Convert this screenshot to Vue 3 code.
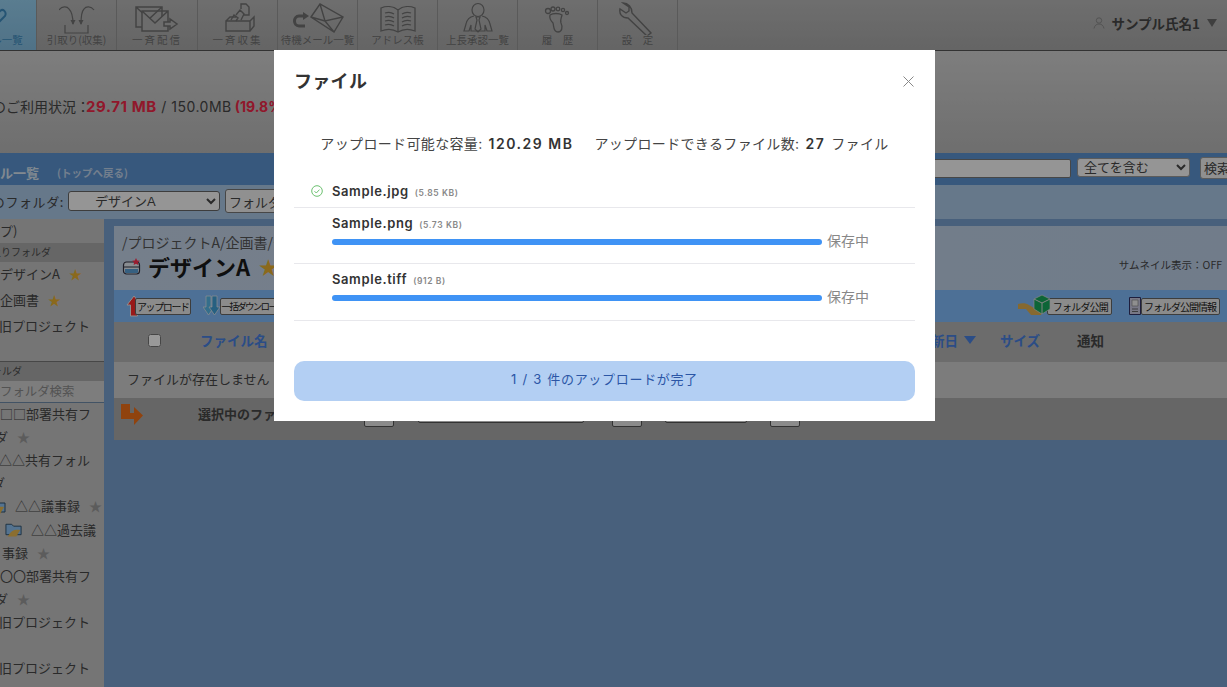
<script setup>
import { ref } from "vue";

const doneCount = ref(1);

const files = [
  { name: "Sample.jpg", size: "5.85 KB", done: true },
  { name: "Sample.png", size: "5.73 KB", done: false },
  { name: "Sample.tiff", size: "912 B", done: false },
];

const favorites = [
  { text: "デザインA", star: "gold" },
  { text: "企画書", star: "gold" },
  { text: "旧プロジェクト", cut: "cut1" },
];
</script>

<template>
  <div class="page">
    <!-- 上部ツールバー -->
    <header class="toolbar">
      <a class="tool active">
        <svg class="ic" width="44" height="34" viewBox="0 0 44 34" fill="none" stroke="#3f8cc0" stroke-width="2">
          <path d="M14 22L25 10c3-3 7 1 5 5L19 26c-2 2-4 1-6 0" />
        </svg>
        <span>メール一覧</span>
      </a>
      <a class="tool">
        <svg class="ic" width="36" height="34" viewBox="0 0 36 34" fill="none" stroke="#707070" stroke-width="1.200">
          <path d="M0 9c3-4 8-4 10-1 3 3 4 9 4 15M35 9c-3-4-8-4-10-1-3 3-3 9-3 15" />
          <path d="M11.500 19l2.500 5 2.500-5zM19.500 19l2.500 5 2.500-5z" fill="#707070" stroke="none" />
          <path d="M6 24v8h23v-8" />
        </svg>
        <span>引取り(収集)</span>
      </a>
      <a class="tool wide first-wide">
        <svg class="ic" width="44" height="34" viewBox="0 0 44 34" fill="none" stroke="#707070" stroke-width="1.500">
          <path d="M1 6h26v20H1zM1 6l13 12L27 6" />
          <path d="M7 10h26v20H7zM7 10l13 12 13-12" fill="#b4b4b4" />
          <path d="M29 21h6v-3l7 5-7 5v-3h-6z" fill="#b4b4b4" />
        </svg>
        <span>一斉配信</span>
      </a>
      <a class="tool wide">
        <svg class="ic" width="36" height="34" viewBox="0 0 36 34" fill="none" stroke="#707070" stroke-width="1.400">
          <path d="M6 20h24v10H6zM30 20l4-4v9l-4 5M6 20l4-4h6" />
          <path d="M11 19l3-5 4 3-2 3M16 14l4-5 4 4-3 6M21 8V3h5l3 3v8h-5" />
        </svg>
        <span>一斉収集</span>
      </a>
      <a class="tool">
        <svg class="ic" width="54" height="34" viewBox="0 0 54 34" fill="none" stroke="#707070">
          <path d="M14 15H8c-6 0-6 10 0 10h6" stroke-width="3" />
          <path d="M12 11l6 4-6 4z" fill="#707070" stroke="none" />
          <path d="M20 16L29 3l23 13-9 15zM29 3l5 17 18-4M20 16l14 4M34 20l9 11" stroke-width="1.400" />
        </svg>
        <span>待機メール一覧</span>
      </a>
      <a class="tool">
        <svg class="ic" width="38" height="34" viewBox="0 0 38 34" fill="none" stroke="#707070" stroke-width="1.300">
          <path d="M19 9C14 5 7 5 2 7v23c5-2 12-2 17 1 5-3 12-3 17-1V7c-5-2-12-2-17 2zM19 9v22" />
          <path d="M6 12c3-1 6-1 9 1M6 16c3-1 6-1 9 1M6 20c3-1 6-1 9 1M6 24c3-1 6-1 9 1M23 13c3-2 6-2 9-1M23 17c3-2 6-2 9-1M23 21c3-2 6-2 9-1M23 25c3-2 6-2 9-1" />
        </svg>
        <span>アドレス帳</span>
      </a>
      <a class="tool">
        <svg class="ic" width="30" height="34" viewBox="0 0 30 34" fill="none" stroke="#707070" stroke-width="1.200">
          <ellipse cx="15" cy="9" rx="6" ry="6.500" />
          <path d="M11 15c-5 1-7 3-8 8l-2 7h5l2-6v6h14v-6l2 6h5l-2-7c-1-5-3-7-8-8" />
          <path d="M13 16h4l-1 3 2 9-3 3-3-3 2-9z" />
        </svg>
        <span>上長承認一覧</span>
      </a>
      <a class="tool">
        <svg class="ic" width="28" height="34" viewBox="0 0 28 34" fill="none" stroke="#707070" stroke-width="1.300">
          <path d="M6 14c-1 4 1 6 3 8 1 3 0 9 5 9 4 0 5-5 3-9-1-3 0-4 1-8-3-2-9-2-12 0z" />
          <circle cx="4" cy="10" r="2.500" />
          <circle cx="9" cy="8" r="2" />
          <circle cx="14" cy="8" r="1.800" />
          <circle cx="19" cy="9" r="1.600" />
          <circle cx="23" cy="12" r="1.500" />
        </svg>
        <span class="spaced">履 歴</span>
      </a>
      <a class="tool">
        <svg class="ic" width="38" height="34" viewBox="0 0 38 34" fill="none" stroke="#707070" stroke-width="1.400">
          <path d="M4 2l6 4v4l-3 2-6-4c-1 5 2 9 8 9l19 18 4-3-19-20c0-6-4-10-9-10z" />
        </svg>
        <span class="spaced">設 定</span>
      </a>
      <div class="user">
        <svg width="12" height="12" viewBox="0 0 12 12" fill="none" stroke="#8a8a8a" stroke-width="1">
          <circle cx="6" cy="3.500" r="2.700" />
          <path d="M1 11.500c.5-3 2.500-4.500 5-4.500s4.500 1.500 5 4.500" />
        </svg>
        <b>サンプル氏名1</b>
        <i class="caret"></i>
      </div>
    </header>

    <!-- 容量 -->
    <section class="usage">
      <p>
        容量のご利用状況：<b class="red mb">29.71 MB</b><span class="limit"> / 150.0MB</span><b class="red">(19.8%)</b>
      </p>
    </section>

    <section class="titlebar">
      <div class="crumb">
        <b>メール一覧</b>
        <small>(トップへ戻る)</small>
      </div>
      <div class="search">
        <input type="text" />
        <select class="sel-all"><option>全てを含む</option></select>
        <button type="button" class="btn-search">検索</button>
      </div>
    </section>

    <section class="folderbar">
      <span class="folder-label">現在のフォルダ:</span>
      <select class="sel-folder"><option>デザインA</option></select>
      <button type="button" class="btn-folder">フォルダ操作</button>
    </section>

    <main class="main">
      <aside class="side">
        <div class="row top"><span class="cut-top">トップ)</span></div>
        <div class="band"><span class="cut-fav">お気に入りフォルダ</span></div>
        <div v-for="f in favorites" :key="f.text" class="row fav">
          <span :class="f.cut">{{ f.text }}</span>
          <i v-if="f.star" class="star gold">★</i>
        </div>
        <div class="band second"><span class="cut-share">フォルダ</span></div>
        <div class="side-search"><span>フォルダ検索</span></div>
        <div class="tree">
          <div class="row">□□部署共有フ</div>
          <div class="row"><span class="cut-da">ダ</span><i class="star">★</i></div>
          <div class="row"><span class="cut1">△△共有フォル</span></div>
          <div class="row"><span class="cut-da2">ダ</span></div>
          <div class="row">
            <svg class="folder cut-icon" width="19" height="18" viewBox="0 0 19 18">
              <path d="M1 4h6l2 2h8v9H1z" fill="#8cc0f0" stroke="#30506c" />
              <path d="M3 17c3-7 8-8 13-7l-4 7z" fill="#e8b850" />
            </svg>
            <span class="t1">△△議事録</span><i class="star">★</i>
          </div>
          <div class="row tall">
            <svg class="folder indent" width="18" height="18" viewBox="0 0 19 18">
              <path d="M1 4h6l2 2h8v9H1z" fill="#8cc0f0" stroke="#30506c" />
              <path d="M3 17c3-7 8-8 13-7l-4 7z" fill="#e8b850" />
            </svg>
            <span class="t2">△△過去議</span>
          </div>
          <div class="row"><span class="t3">事録</span><i class="star">★</i></div>
          <div class="row">〇〇部署共有フ</div>
          <div class="row"><span class="cut-da">ダ</span><i class="star">★</i></div>
          <div class="row"><span class="cut1">旧プロジェクト</span></div>
          <div class="row"></div>
          <div class="row"><span class="cut1">旧プロジェクト</span></div>
        </div>
      </aside>

      <div class="content">
        <div class="panel">
          <div class="path">/プロジェクトA/企画書/デザインA</div>
          <div class="panel-title">
            <svg width="20" height="18" viewBox="0 0 20 18" fill="none">
              <rect x="1.500" y="5" width="16" height="12" rx="3" fill="#e4ecf4" stroke="#334" stroke-width="1.200" />
              <path d="M2 10h15" stroke="#334" />
              <path d="M3 12h13v3c0 .6-.4 1-1 1H4c-.6 0-1-.4-1-1z" fill="#5aa0d8" />
              <path d="M14 1l1.200 2.400 2.600.3-1.900 1.800.5 2.500-2.400-1.200-2.400 1.200.5-2.500-1.900-1.800 2.600-.3z" fill="#ff3050" />
            </svg>
            <h1>デザインA</h1>
            <i class="star gold big">★</i>
            <span class="thumb">サムネイル表示：OFF</span>
          </div>
        </div>

        <div class="actions">
          <a class="act upload">
            <svg width="16" height="22" viewBox="0 0 16 22">
              <path d="M8 1l7 9h-3.500v11h-7V10H1z" fill="#ff2a2a" stroke="#eee" />
            </svg>
            <span>アップロード</span>
          </a>
          <a class="act download">
            <svg width="18" height="22" viewBox="0 0 18 22">
              <path d="M3 1h5v11h3l-5.500 8L0 12h3z" fill="#58b8e8" stroke="#eee" stroke-width=".7" />
              <path d="M9 1h5v11h3l-5.500 8L6 12h3z" fill="#40a0d8" stroke="#eee" stroke-width=".7" />
            </svg>
            <span>一括ダウンロード</span>
          </a>
          <a class="act publish">
            <svg width="33" height="24" viewBox="0 0 33 24">
              <path d="M0 10c4-1 8-1 11 1l5 3h10l-3 7H13L8 15H0z" fill="#e0b050" />
              <path d="M24 1l8 4v10l-8 5-8-5V5z" fill="#16a85c" stroke="#ddd" stroke-width=".7" />
              <path d="M16 5l8 4 8-4M24 9v11" stroke="#ddd" stroke-width="1" fill="none" />
            </svg>
            <span>フォルダ公開</span>
          </a>
          <a class="act info">
            <svg width="12" height="18" viewBox="0 0 12 18">
              <path d="M.5.500h11v17H.5z" fill="#c8c8e0" stroke="#336" />
              <path d="M3 3h6v6H3z" fill="#eee" stroke="#888" stroke-width=".7" />
              <path d="M3 12h6M3 14.500h6" stroke="#666" />
            </svg>
            <span>フォルダ公開情報</span>
          </a>
        </div>

        <div class="thead">
          <input class="check" type="checkbox" />
          <b class="th-name">ファイル名</b>
          <b class="th-date">更新日<i class="sort"></i></b>
          <b class="th-size">サイズ</b>
          <b class="th-note">通知</b>
        </div>
        <div class="empty">ファイルが存在しません</div>
        <div class="selectbar">
          <svg width="22" height="23" viewBox="0 0 22 23">
            <path d="M0 1h9v9h4V4l9 8.500-9 9.500v-6H0z" fill="#f07018" />
          </svg>
          <b>選択中のファイルを</b>
          <div class="ctrls">
            <i class="ctrl w30"></i>
            <i class="ctrl w166 shallow"></i>
            <i class="ctrl w30"></i>
            <i class="ctrl w82 shallow"></i>
            <i class="ctrl w30"></i>
          </div>
        </div>
      </div>
    </main>

    <!-- アップロードモーダル -->
    <div class="overlay">
      <div class="modal">
        <h2>ファイル</h2>
        <button type="button" class="close" aria-label="閉じる">
          <svg width="11" height="11" viewBox="0 0 11 11" stroke="#888" stroke-width="1">
            <path d="M.5.500l10 10M10.500.500l-10 10" />
          </svg>
        </button>

        <p class="quota">
          <span>アップロード可能な容量:</span>
          <b>120.29 MB</b>
          <span class="gap">アップロードできるファイル数:</span>
          <b>27</b>
          <span>ファイル</span>
        </p>

        <ul class="files">
          <li v-for="f in files" :key="f.name" :class="{ done: f.done }">
            <svg v-if="f.done" class="ok" width="12" height="12" viewBox="0 0 12 12" fill="none" stroke="#6cc070">
              <circle cx="6" cy="6" r="5.300" />
              <path d="M3.500 6.200l1.800 1.800 3.200-3.400" />
            </svg>
            <div class="file-name">
              <b>{{ f.name }}</b>
              <small>({{ f.size }})</small>
            </div>
            <div v-if="!f.done" class="progress">
              <div class="bar"></div>
              <span>保存中</span>
            </div>
          </li>
        </ul>

        <div class="status">{{ doneCount }} / {{ files.length }} 件のアップロードが完了</div>
      </div>
    </div>
  </div>
</template>

<style scoped>
.page {
  position: relative;
  width: 1227px;
  height: 687px;
  overflow: hidden;
  display: flex;
  flex-direction: column;
  font-family: "Noto Sans CJK JP", sans-serif;
  font-size: 13px;
  color: #464646;
  background: #cfcfcf;
}

/* toolbar */
.toolbar {
  flex: none;
  display: flex;
  height: 51px;
  margin-left: -43px;
  width: 1270px;
  background: linear-gradient(#b8b8b8, #a8a8a8);
  border-bottom: 1px solid #555;
  box-sizing: border-box;
}
.tool {
  flex: none;
  width: 80px;
  height: 50px;
  box-sizing: border-box;
  border-right: 1px solid #969696;
  display: flex;
  flex-direction: column;
  align-items: center;
  font-size: 10.500px;
  line-height: 12px;
  color: #707070;
  white-space: nowrap;
}
.tool .ic {
  flex: none;
  margin-top: 1px;
}
.tool span {
  margin-top: -1px;
}
.tool.active {
  background: linear-gradient(#96d0f0, #85bee1);
  color: #3f8cc0;
}
.tool.first-wide {
  width: 81px;
}
.tool.wide span {
  letter-spacing: 2px;
}
.tool .spaced {
  word-spacing: 8px;
}
.user {
  margin-left: auto;
  display: flex;
  align-items: center;
  gap: 6px;
  height: 46px;
  padding-right: 10px;
  color: #464646;
}
.user b {
  font-size: 13.500px;
}
.caret {
  width: 0;
  height: 0;
  margin-left: 1px;
  border-left: 5px solid transparent;
  border-right: 5px solid transparent;
  border-top: 8px solid #6a6a6a;
}

/* usage */
.usage {
  flex: none;
  height: 102px;
  box-sizing: border-box;
  background: linear-gradient(#d2d2d2, #b8b8b8);
  display: flex;
  align-items: center;
  padding-top: 7px;
  margin-left: -36px;
}
.usage p {
  margin: 0;
  font-size: 14px;
  color: #464646;
  white-space: nowrap;
  font-family: Inter, "Noto Sans CJK JP", sans-serif;
}
.red {
  color: #f02848;
  font-weight: 700;
}
.mb {
  margin-left: -4px;
  font-size: 15px;
  letter-spacing: 0.6px;
}
.limit {
  letter-spacing: 0.5px;
  margin-right: 3px;
}

/* title bar */
.titlebar {
  flex: none;
  height: 32px;
  box-sizing: border-box;
  padding-top: 4px;
  background: #5c93d0;
  display: flex;
  justify-content: space-between;
  overflow: hidden;
}
.crumb {
  display: flex;
  align-items: center;
  gap: 18px;
  height: 30px;
  margin-left: -26px;
  color: #d8e4f0;
  white-space: nowrap;
  font-size: 13px;
}
.crumb small {
  font-size: 10.500px;
  font-weight: 700;
  color: #c0d4ec;
}
.search {
  display: flex;
  align-items: flex-start;
  height: 22px;
}
.search input {
  width: 400px;
  height: 19px;
  box-sizing: border-box;
  margin: 2px 6px 0 0;
  background: #f8f8f8;
  border: 1px solid #777;
  border-radius: 2px;
}
.sel-all {
  width: 113px;
  height: 19px;
  margin: 1px 10px 0 0;
  font-size: 13px;
  font-family: "Liberation Sans", "Noto Sans CJK JP", sans-serif;
  background: #f8f8f8;
  color: #464646;
  border: 1px solid #999;
  border-radius: 3px;
  padding: 0 2px;
}
.btn-search {
  width: 42px;
  height: 22px;
  margin-right: -15px;
  padding: 0 3px;
  text-align: left;
  font-size: 13px;
  line-height: 20px;
  font-family: inherit;
  color: #464646;
  background: #f0f0f0;
  border: 1px solid #999;
  border-radius: 3px;
}

.folderbar {
  flex: none;
  height: 34px;
  box-sizing: border-box;
  padding-bottom: 2px;
  background: #aac8e6;
  display: flex;
  align-items: center;
  margin-left: -45px;
  font-size: 13px;
  white-space: nowrap;
}
.folder-label {
  letter-spacing: 0.6px;
  margin-right: 4px;
  width: 109px;
  text-align: right;
}
.sel-folder {
  width: 152px;
  height: 20px;
  font-size: 13px;
  font-family: "Liberation Sans", "Noto Sans CJK JP", sans-serif;
  padding-left: 22px;
  color: #464646;
  background: #f8f8f8;
  border: 1px solid #666;
  border-radius: 3px;
  margin-right: 5px;
}
.btn-folder {
  width: 90px;
  height: 24px;
  padding: 0 3px;
  font-size: 13px;
  font-family: inherit;
  color: #464646;
  text-align: left;
  background: #f0f0f0;
  border: 1px solid #777;
  border-radius: 3px;
}

/* main */
.main {
  flex: 1;
  min-height: 0;
  display: flex;
  background: #78a0cf;
}
.side {
  flex: none;
  width: 104px;
  background: #c3c3c3;
  overflow: hidden;
  white-space: nowrap;
  color: #464646;
}
.row {
  height: 23px;
  box-sizing: border-box;
  padding-bottom: 2px;
  line-height: 21px;
  display: flex;
  align-items: center;
}
.row.top {
  height: 24px;
}
.row.fav {
  height: 26px;
  padding-bottom: 4px;
}
.row.tall {
  height: 24px;
}
.cut-top {
  margin-left: -26px;
}
.cut-fav {
  margin-left: -39px;
}
.cut-share {
  margin-left: -18px;
}
.cut1 {
  margin-left: -1px;
}
.cut-da {
  margin-left: -5px;
}
.cut-da2 {
  margin-left: -8px;
}
.band {
  height: 19px;
  line-height: 17px;
  background: #aaaaaa;
  font-size: 10px;
  color: #4a4a4a;
}
.band.second {
  height: 20px;
  margin-top: 21px;
  border-top: 1px solid #777;
  box-sizing: border-box;
}
.side-search {
  height: 22px;
  line-height: 20px;
  font-size: 12.400px;
  color: #8a8a8a;
  background: #d0d0d0;
  border-bottom: 1px solid #6e8aa8;
  box-sizing: border-box;
}
.star {
  font-style: normal;
  font-size: 13px;
  color: #9a9a9a;
  margin-left: 9px;
}
.star.gold {
  color: #e8b030;
}
.folder {
  flex: none;
}
.cut-icon {
  margin-left: -12px;
}
.indent {
  margin-left: 5px;
}
.t1,
.t2 {
  margin-left: 8px;
}
.t3 {
  margin-left: 2px;
}

/* content */
.content {
  flex: 1;
  min-width: 0;
  padding: 7px 0 0 10px;
}
.panel {
  height: 64px;
  box-sizing: border-box;
  background: linear-gradient(90deg, #c4d4e8, #bccfe6);
  padding: 6px 5px 0 8px;
}
.path {
  font-size: 14px;
  line-height: 20px;
  color: #555;
}
.panel-title {
  display: flex;
  align-items: center;
  height: 32px;
  margin-top: -2px;
}
.panel-title h1 {
  margin: 0 0 0 6px;
  font-size: 22px;
  line-height: 32px;
  font-weight: 700;
  color: #1a1a1a;
}
.star.big {
  font-size: 19px;
  margin-left: 9px;
}
.thumb {
  margin-left: auto;
  font-size: 10.500px;
  color: #464646;
  margin-top: -4px;
}
.actions {
  height: 32px;
  background: #80bbfa;
  display: flex;
  align-items: center;
  padding: 0 7px 0 12px;
}
.act {
  display: flex;
  align-items: center;
  font-size: 10px;
  letter-spacing: -1.400px;
  color: #222;
  white-space: nowrap;
}
.act span {
  height: 17px;
  line-height: 15px;
  box-sizing: border-box;
  background: #e8e8e8;
  border: 1px solid #666;
  border-radius: 2px;
  padding: 0 1px;
  margin-left: -7px;
}
.download {
  margin-left: 12px;
}
.download span {
  margin-left: -1px;
  font-size: 9.500px;
  letter-spacing: -1.700px;
}
.publish {
  margin-left: auto;
}
.publish span {
  margin-left: -4px;
  padding: 0 3px 0 5px;
  letter-spacing: -0.800px;
}
.publish svg {
  position: relative;
}
.info {
  margin-left: 17px;
}
.info span {
  margin-left: 0;
  padding: 0 3px 0 2px;
  letter-spacing: -1px;
}
.thead {
  height: 40px;
  box-sizing: border-box;
  padding-bottom: 4px;
  background: #b4b4b4;
  display: flex;
  align-items: center;
  font-size: 13.500px;
}
.check {
  width: 13px;
  height: 13px;
  margin: 0 0 0 34px;
  flex: none;
}
.thead b {
  white-space: nowrap;
  color: #4880e0;
}
.th-name {
  margin-left: 39px;
}
.th-date {
  margin-left: auto;
  display: flex;
  align-items: center;
}
.sort {
  width: 0;
  height: 0;
  margin-left: 6px;
  border-left: 6px solid transparent;
  border-right: 6px solid transparent;
  border-top: 8px solid #4880e0;
}
.th-size {
  margin-left: 24px;
}
.thead .th-note {
  margin-left: 37px;
  margin-right: 123px;
  color: #464646;
}
.empty {
  height: 36px;
  line-height: 34px;
  padding-left: 13px;
  background: #cfcfcf;
}
.selectbar {
  height: 42px;
  box-sizing: border-box;
  padding: 5px 0 0 7px;
  background: #aaaaaa;
  display: flex;
  align-items: flex-start;
  white-space: nowrap;
}
.selectbar b {
  margin-left: 55px;
  line-height: 22px;
}
.ctrls {
  display: flex;
  align-items: flex-start;
  margin: 2px 0 0 49px;
}
.ctrl {
  display: block;
  height: 22px;
  box-sizing: border-box;
  background: #e8e8e8;
  border: 1px solid #555;
  border-radius: 2px;
}
.ctrl.shallow {
  height: 18px;
}
.w30 {
  width: 30px;
}
.w166 {
  width: 166px;
  margin: 0 28px 0 24px;
}
.w82 {
  width: 82px;
  margin: 0 23px;
}

/* modal */
.overlay {
  position: absolute;
  inset: 0;
  background: rgba(0, 0, 0, 0.4);
  display: flex;
  align-items: flex-start;
  padding: 50px 0 0 274px;
  box-sizing: border-box;
}
.modal {
  position: relative;
  width: 661px;
  height: 371px;
  box-sizing: border-box;
  background: #fff;
  padding: 20px;
  font-family: Inter, "Noto Sans CJK JP", sans-serif;
  color: #333;
}
.modal h2 {
  margin: 0;
  font-size: 18px;
  line-height: 24px;
  font-weight: 700;
  color: #333;
  letter-spacing: 0.3px;
}
.close {
  position: absolute;
  top: 26px;
  right: 21px;
  padding: 0;
  width: 11px;
  height: 11px;
  line-height: 0;
  border: 0;
  background: none;
}
.quota {
  margin: 40px 0 0;
  height: 20px;
  line-height: 20px;
  display: flex;
  justify-content: center;
  gap: 6px;
  font-size: 14px;
  letter-spacing: 0.35px;
  color: #444;
  white-space: nowrap;
}
.quota b {
  color: #333;
  font-weight: 600;
  letter-spacing: 1.500px;
}
.quota .gap {
  margin-left: 15px;
}
.files {
  list-style: none;
  margin: 25px 0 0;
  padding: 0;
}
.files li {
  position: relative;
  height: 57px;
  box-sizing: border-box;
  border-bottom: 1px solid #e8e8ec;
  padding: 5px 0 0 38px;
}
.files li:nth-child(2) {
  height: 56px;
}
.files li.done {
  height: 29px;
  padding-top: 2px;
}
.ok {
  position: absolute;
  left: 17px;
  top: 6px;
}
.file-name {
  display: flex;
  align-items: baseline;
  gap: 6px;
  line-height: 20px;
}
.file-name b {
  font-size: 13px;
  font-weight: 600;
  color: #333;
  letter-spacing: 0.6px;
}
.file-name small {
  font-size: 8.500px;
  font-weight: 600;
  letter-spacing: 0.6px;
  color: #888;
}
.progress {
  display: flex;
  align-items: center;
  gap: 5px;
  margin-top: -4px;
  height: 22px;
}
.bar {
  width: 490px;
  height: 6px;
  border-radius: 3px;
  background: #3f93f5;
}
.progress span {
  margin-top: -4px;
  font-size: 14px;
  color: #888;
  white-space: nowrap;
}
.status {
  margin-top: 40px;
  height: 40px;
  line-height: 37px;
  border-radius: 10px;
  background: #b3cff3;
  color: #2b56a6;
  text-align: center;
  font-size: 13px;
  letter-spacing: 0.7px;
  word-spacing: 1px;
}
</style>

<style>
html,
body {
  margin: 0;
  overflow: hidden;
}
</style>
